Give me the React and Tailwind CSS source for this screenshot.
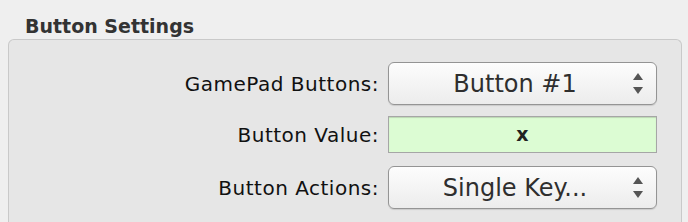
import React from "react";

const font = { fontFamily: '"DejaVu Sans", Verdana, sans-serif' };

function Arrows() {
  return (
    <svg width="10" height="21" viewBox="0 0 10 21" className="shrink-0">
      <path d="M5 0 L10 7 L0 7 Z" fill="#555" />
      <path d="M0 14 L10 14 L5 21 Z" fill="#555" />
    </svg>
  );
}

function PopUp({ value }) {
  return (
    <div className="flex h-[43px] w-[269px] items-center rounded-[6px] border border-[#949494] bg-gradient-to-b from-[#fdfdfd] to-[#ececec] pr-[13px] shadow-[0_1px_1px_rgba(0,0,0,0.12)]">
      <span className="flex-1 pl-[8px] text-center text-[24px] text-[#2e2e2e]">{value}</span>
      <Arrows />
    </div>
  );
}

function Label({ children }) {
  return <span className="text-right text-[20px] tracking-[0.5px] text-[#111]">{children}</span>;
}

export default function App() {
  return (
    <div className="h-[222px] w-[688px] overflow-hidden bg-[#efefef]" style={font}>
      <div className="pl-[25px] pt-[14px] text-[19px] font-bold leading-[24px] text-[#333]">Button Settings</div>
      <div className="ml-[8px] mt-[1px] w-[674px] rounded-t-[6px] border border-b-0 border-[#c9c9c9] bg-[#e6e6e6] pb-[20px] pr-[24px] pt-[22px]">
        <div className="grid grid-cols-[auto_269px] items-center justify-end gap-x-[9px]">
          <Label>GamePad Buttons:</Label>
          <PopUp value="Button #1" />

          <div className="col-span-2 h-[11px]" />

          <Label>Button Value:</Label>
          <div className="flex h-[37px] w-[269px] items-center justify-center border border-[#a6a6a6] bg-[#dcfcd3] text-[19px] font-bold text-[#222] shadow-[inset_0_1px_1px_rgba(0,0,0,0.15)]">
            x
          </div>

          <div className="col-span-2 h-[13px]" />

          <Label>Button Actions:</Label>
          <PopUp value="Single Key..." />
        </div>
      </div>
    </div>
  );
}
